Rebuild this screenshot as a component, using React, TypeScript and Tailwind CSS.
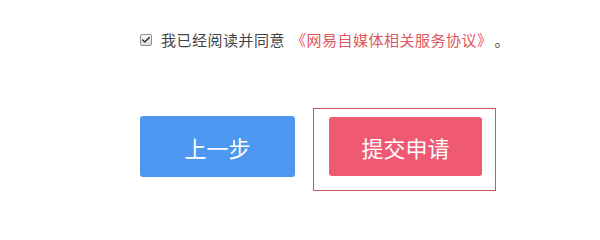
import { Check } from 'lucide-react';

export default function App() {
  return (
    <div
      className="w-[600px] h-[219px] bg-white overflow-hidden"
      style={{ fontFamily: '"Microsoft YaHei", "Noto Sans CJK SC", sans-serif' }}
    >
      {/* Agreement row */}
      <div className="flex items-center pt-[30px] pl-[140px] h-[50px] text-[15px] leading-[20px] tracking-[0.5px]">
        <span className="flex items-center justify-center w-[12px] h-[12px] border border-[#8f8f8f] rounded-[2px] bg-gradient-to-b from-[#fafafa] to-[#dcdcdc]">
          <Check size={10} strokeWidth={3.5} className="text-[#333]" />
        </span>
        <span className="ml-[9px] text-[#444]">我已经阅读并同意</span>
        <span className="ml-[6px] text-[#e2565f]">《网易自媒体相关服务协议》</span>
        <span className="ml-[2px] text-[#444]">。</span>
      </div>

      {/* Buttons */}
      <div className="flex items-start pl-[140px] mt-[58px]">
        <button className="mt-[8px] w-[155px] h-[61px] rounded-[3px] bg-[#4d97f1] text-white text-[22px] leading-none">
          上一步
        </button>
        <div className="ml-[18px] w-[183px] h-[83px] border border-[#c85563] pt-[8px] pl-[15px]">
          <button className="w-[153px] h-[59px] rounded-[3px] bg-[#ef5a72] text-white text-[22px] leading-none">
            提交申请
          </button>
        </div>
      </div>
    </div>
  );
}
